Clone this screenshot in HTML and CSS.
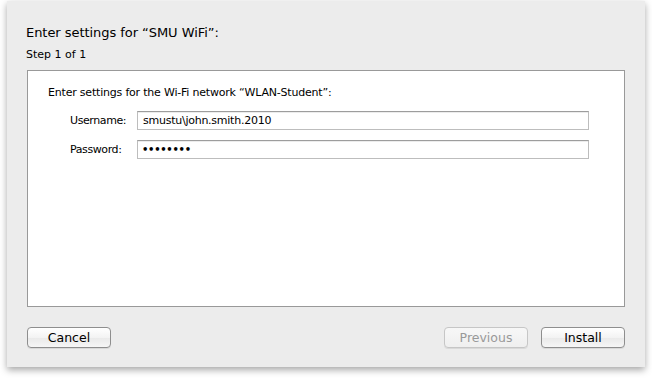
FILE: index.html
```html
<!DOCTYPE html>
<html>
<head>
<meta charset="utf-8">
<link rel="stylesheet" href="styles.css">
</head>
<body>
<div class="sheet">
  <div class="title">Enter settings for “SMU WiFi”:</div>
  <div class="step">Step 1 of 1</div>
  <div class="panel">
    <div class="intro">Enter settings for the Wi-Fi network “WLAN-Student”:</div>
    <div class="form">
      <label class="label">Username:</label>
      <div class="field">smustu\john.smith.2010</div>
      <label class="label">Password:</label>
      <div class="field dots">••••••••</div>
    </div>
  </div>
  <div class="buttons">
    <button class="btn">Cancel</button>
    <div class="spacer"></div>
    <button class="btn disabled">Previous</button>
    <button class="btn">Install</button>
  </div>
</div>
</body>
</html>
```

FILE: styles.css
```css
html, body {
  margin: 0;
  padding: 0;
  background: #ffffff;
}
body {
  width: 652px;
  height: 378px;
  overflow: hidden;
  font-family: "DejaVu Sans", "Lucida Grande", sans-serif;
  color: #000;
}
.sheet {
  margin: 1px 0 0 7px;
  width: 638px;
  height: 366px;
  box-sizing: border-box;
  background: #ececec;
  box-shadow: 0 3px 7px rgba(0,0,0,0.35);
  padding: 24px 20px 19px 20px;
  display: flex;
  flex-direction: column;
}
.title {
  font-size: 13px;
  line-height: 16px;
  margin-left: -1px;
  letter-spacing: -0.05px;
}
.step {
  font-size: 11px;
  line-height: 14px;
  margin-top: 7px;
  margin-left: -1px;
}
.panel {
  margin-top: 8px;
  height: 237px;
  box-sizing: border-box;
  border: 1px solid #999999;
  background: #ffffff;
  padding: 15px 0 0 20px;
}
.intro {
  font-size: 11px;
  line-height: 14px;
  letter-spacing: -0.2px;
}
.form {
  margin-top: 11px;
  margin-left: 22px;
  display: grid;
  grid-template-columns: 67px 452px;
  row-gap: 10px;
  align-items: center;
}
.label {
  font-size: 11px;
  line-height: 14px;
  letter-spacing: -0.4px;
}
.field {
  height: 19px;
  box-sizing: border-box;
  border: 1px solid #bdbdbd;
  border-top-color: #9d9d9d;
  box-shadow: inset 0 1px 0 #ececec;
  padding: 0 5px;
  font-size: 11px;
  line-height: 17px;
  letter-spacing: -0.25px;
  white-space: nowrap;
}
.dots {
  font-size: 10px;
  font-weight: bold;
  letter-spacing: -0.3px;
  padding-left: 4px;
}
.buttons {
  margin-top: 20px;
  display: flex;
  gap: 13px;
}
.spacer {
  flex: 1;
}
.btn {
  width: 84px;
  height: 21px;
  box-sizing: border-box;
  border: 1px solid #8e8e8e;
  border-radius: 4px;
  background: linear-gradient(#ffffff, #f3f3f3 50%, #e9e9e9 51%, #f6f6f6);
  box-shadow: 0 1px 0 rgba(0,0,0,0.08);
  font-family: "DejaVu Sans", "Lucida Grande", sans-serif;
  font-size: 12.5px;
  line-height: 19px;
  padding: 0;
  color: #000;
  text-align: center;
}
.btn.disabled {
  color: #999999;
  border-color: #c6c6c6;
  background: linear-gradient(#f7f7f7, #efefef);
}
```
